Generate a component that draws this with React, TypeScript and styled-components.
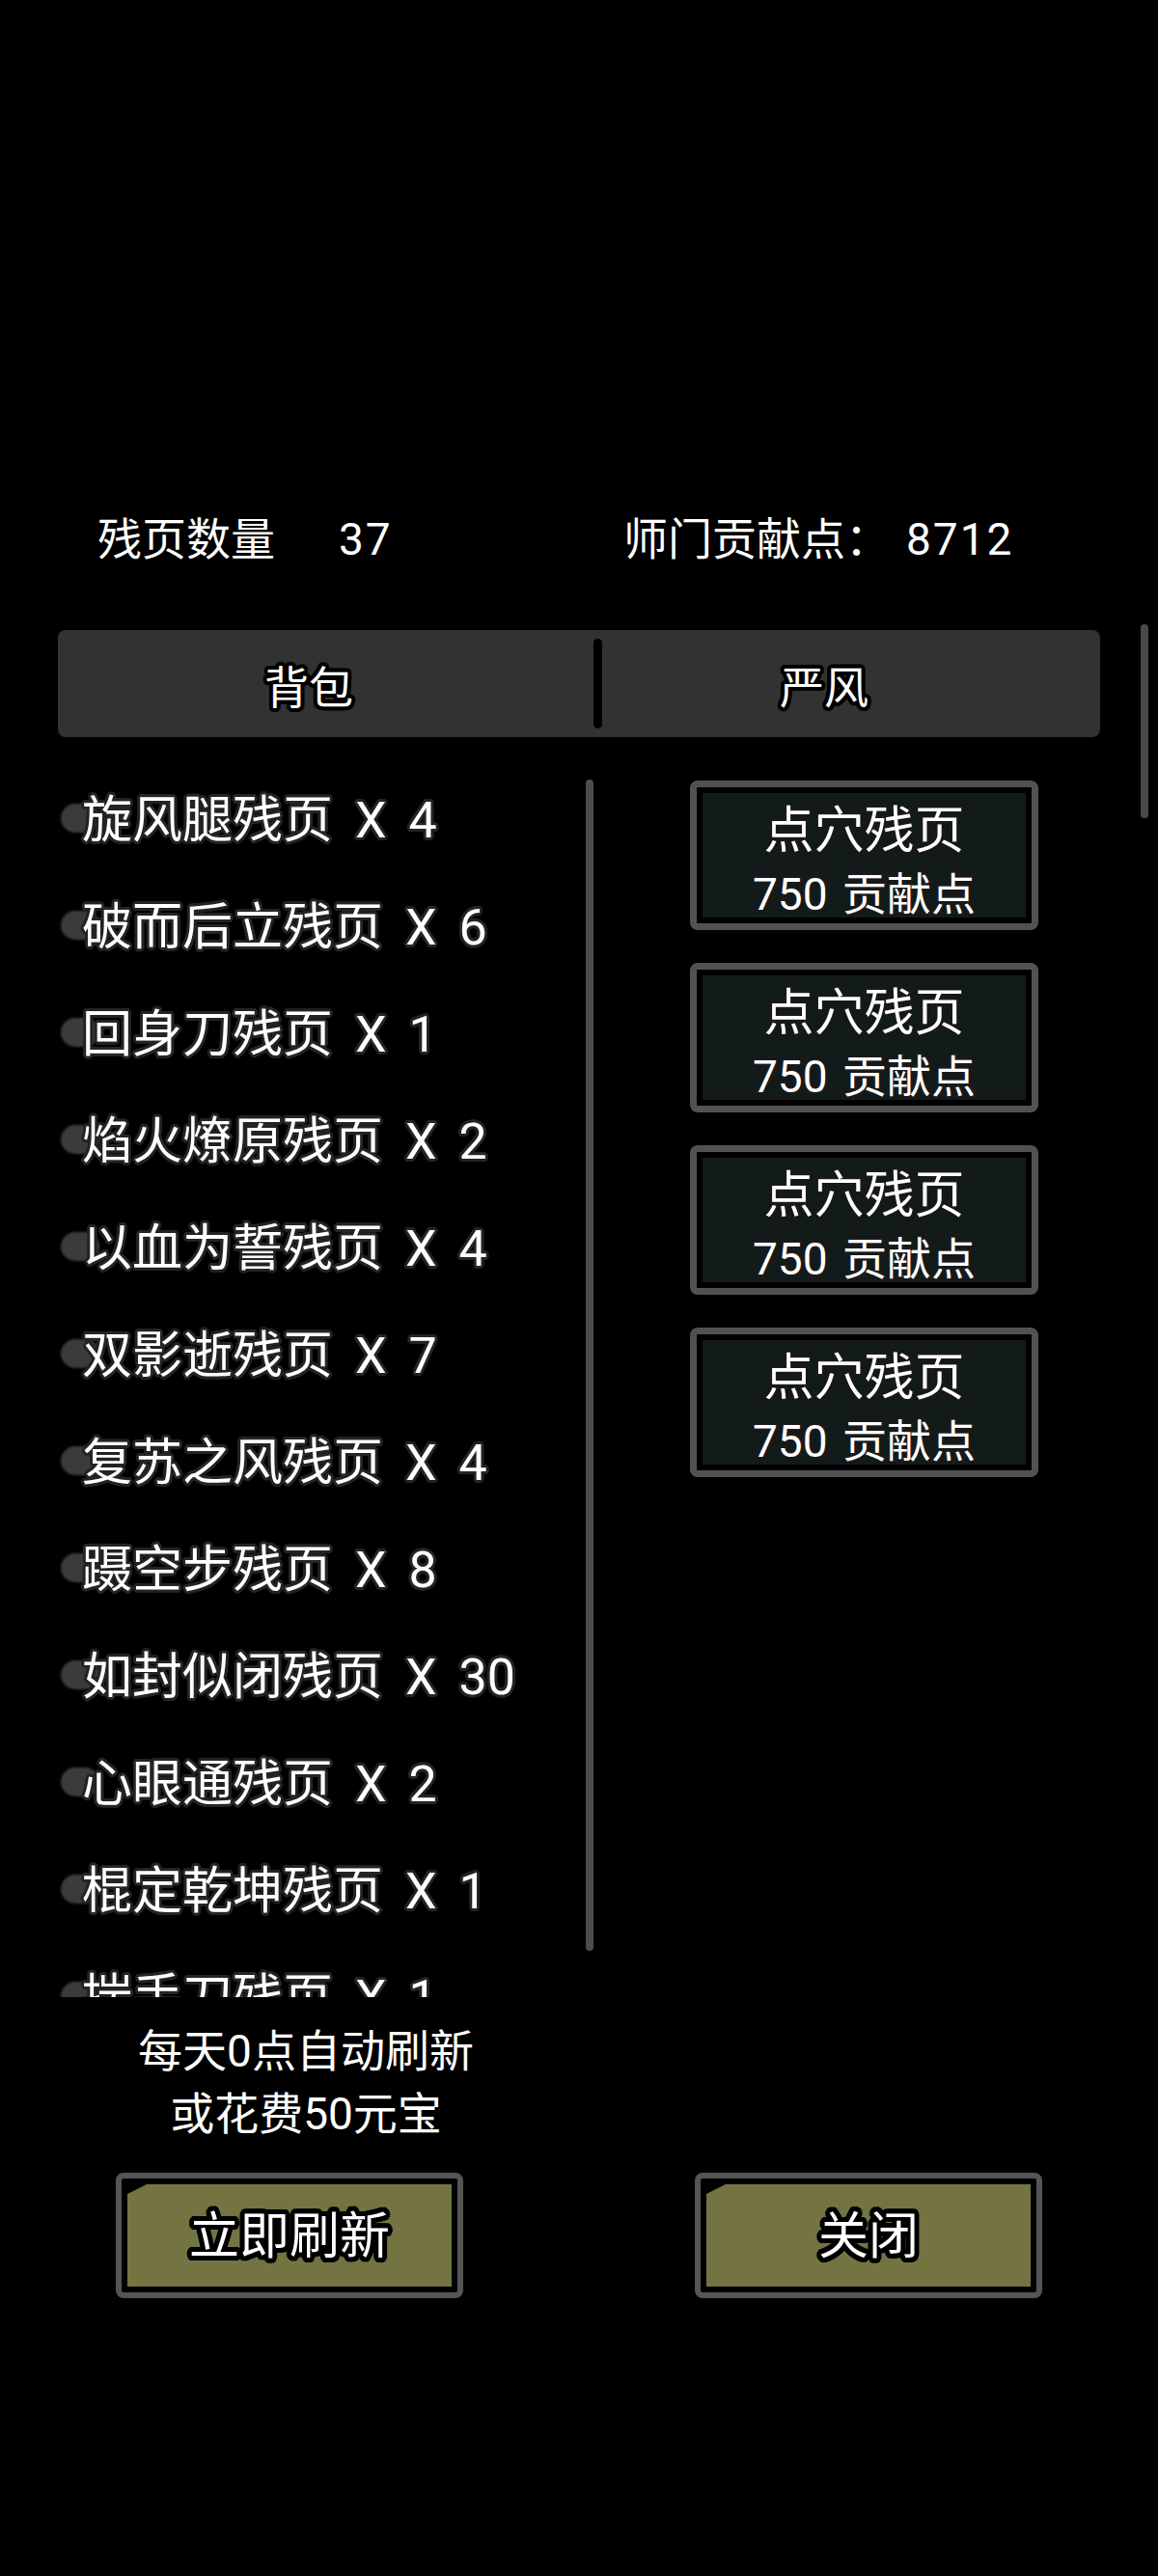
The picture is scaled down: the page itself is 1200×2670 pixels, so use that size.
import React from "react";
import styled, { createGlobalStyle, css } from "styled-components";

const GlobalStyle = createGlobalStyle`
  html, body {
    margin: 0;
    padding: 0;
    background: #000;
  }
  * { box-sizing: border-box; }
`;

const outline = (color: string, w: number) => {
  const parts: string[] = [];
  const steps = 16;
  for (let i = 0; i < steps; i++) {
    const a = (i / steps) * Math.PI * 2;
    parts.push(`${(Math.cos(a) * w).toFixed(2)}px ${(Math.sin(a) * w).toFixed(2)}px 0 ${color}`);
  }
  return css`text-shadow: ${parts.join(", ")};`;
};

const Screen = styled.div`
  position: relative;
  width: 1200px;
  height: 2670px;
  background: #000;
  color: #fff;
  font-family: Roboto, "Noto Sans CJK SC", "Noto Sans", sans-serif;
  font-weight: 400;
  overflow: hidden;
`;

const PageScroll = styled.div`
  position: absolute;
  left: 1182px;
  top: 647px;
  width: 8px;
  height: 201px;
  border-radius: 4px;
  background: #4a4a4a;
`;

const Header = styled.div`
  display: grid;
  grid-template-columns: 545px auto;
  padding: 529px 0 0 101px;
  font-size: 46px;
  line-height: 60px;
`;

const Stat = styled.div`
  display: flex;
  white-space: nowrap;
`;

const StatValue = styled.span<{ $gap: number }>`
  margin-left: ${(p) => p.$gap}px;
  letter-spacing: 2px;
`;

const TabBar = styled.div`
  margin: 64px 60px 0;
  height: 111px;
  background: #323232;
  border-radius: 8px;
  display: grid;
  grid-template-columns: 555px 9px 1fr;
  align-items: center;
`;

const Tab = styled.div<{ $shift: number }>`
  text-align: center;
  padding: 8px ${(p) => p.$shift}px 0 0;
  font-size: 46px;
  line-height: 60px;
  ${outline("#000", 4)}
`;

const TabDivider = styled.div`
  width: 9px;
  height: 93px;
  background: #000;
  border-radius: 5px;
`;

const Content = styled.div`
  display: grid;
  grid-template-columns: 560px 361px;
  column-gap: 95px;
  padding-left: 60px;
  margin-top: 28px;
  align-items: start;
`;

const ListBox = styled.div`
  position: relative;
  height: 1278px;
  overflow: hidden;
`;

const ListScroll = styled.div`
  position: absolute;
  left: 547px;
  top: 16px;
  width: 8px;
  height: 1214px;
  border-radius: 4px;
  background: #4d4d4d;
`;

const Row = styled.div`
  display: flex;
  align-items: center;
  height: 111px;
  padding-left: 3px;
`;

const Bullet = styled.div`
  width: 40px;
  height: 30px;
  border-radius: 15px;
  background: #3b3b3b;
  filter: blur(1px);
  margin-right: -18px;
  flex: none;
`;

const RowText = styled.div`
  position: relative;
  top: 3px;
  font-size: 52px;
  line-height: 70px;
  white-space: nowrap;
  word-spacing: 10px;
  ${outline("#242424", 3)}
`;

const Cards = styled.div`
  display: flex;
  flex-direction: column;
  gap: 34px;
  padding-top: 17px;
`;

const Card = styled.div`
  height: 155px;
  border: 7px solid #525252;
  border-radius: 8px;
  padding: 6px;
  background: #000;
`;

const CardInner = styled.div`
  height: 100%;
  background: #121a1a;
  text-align: center;
  padding-top: 8px;
`;

const CardTitle = styled.div`
  font-size: 52px;
  line-height: 64px;
  ${outline("#1a1a1a", 2)}
`;

const CardPrice = styled.div`
  font-size: 46px;
  line-height: 60px;
  margin-top: 3px;
  word-spacing: 4px;
  ${outline("#1a1a1a", 2)}
`;

const Notice = styled.div`
  width: 634px;
  margin-top: 24px;
  text-align: center;
  font-size: 46px;
  line-height: 65px;
`;

const Buttons = styled.div`
  display: grid;
  grid-template-columns: 360px 360px;
  column-gap: 240px;
  padding-left: 120px;
  margin-top: 28px;
`;

const Button = styled.div`
  height: 130px;
  border: 6px solid #555;
  border-radius: 8px;
  padding: 6px;
  background: #000;
`;

const ButtonFace = styled.div`
  height: 100%;
  background: #737442;
  clip-path: polygon(20px 0, 100% 0, 100% 100%, 0 100%, 0 10px);
  display: flex;
  align-items: center;
  justify-content: center;
  padding-top: 4px;
  font-size: 52px;
  line-height: 60px;
  ${outline("#000", 5)}
`;

const items: [string, number][] = [
  ["旋风腿残页", 4],
  ["破而后立残页", 6],
  ["回身刀残页", 1],
  ["焰火燎原残页", 2],
  ["以血为誓残页", 4],
  ["双影逝残页", 7],
  ["复苏之风残页", 4],
  ["蹑空步残页", 8],
  ["如封似闭残页", 30],
  ["心眼通残页", 2],
  ["棍定乾坤残页", 1],
  ["揣手刀残页", 1],
];

export default function App() {
  return (
    <Screen>
      <GlobalStyle />
      <Header>
        <Stat>
          <span>残页数量</span>
          <StatValue $gap={66}>37</StatValue>
        </Stat>
        <Stat>
          <span>师门贡献点：</span>
          <StatValue $gap={17}>8712</StatValue>
        </Stat>
      </Header>
      <TabBar>
        <Tab $shift={35}>背包</Tab>
        <TabDivider />
        <Tab $shift={56}>严风</Tab>
      </TabBar>
      <Content>
        <ListBox>
          {items.map(([name, n], i) => (
            <Row key={i}>
              <Bullet />
              <RowText>
                {name} X {n}
              </RowText>
            </Row>
          ))}
          <ListScroll />
        </ListBox>
        <Cards>
          {[0, 1, 2, 3].map((i) => (
            <Card key={i}>
              <CardInner>
                <CardTitle>点穴残页</CardTitle>
                <CardPrice>750 贡献点</CardPrice>
              </CardInner>
            </Card>
          ))}
        </Cards>
      </Content>
      <Notice>
        每天0点自动刷新
        <br />
        或花费50元宝
      </Notice>
      <Buttons>
        <Button>
          <ButtonFace>立即刷新</ButtonFace>
        </Button>
        <Button>
          <ButtonFace>关闭</ButtonFace>
        </Button>
      </Buttons>
      <PageScroll />
    </Screen>
  );
}
